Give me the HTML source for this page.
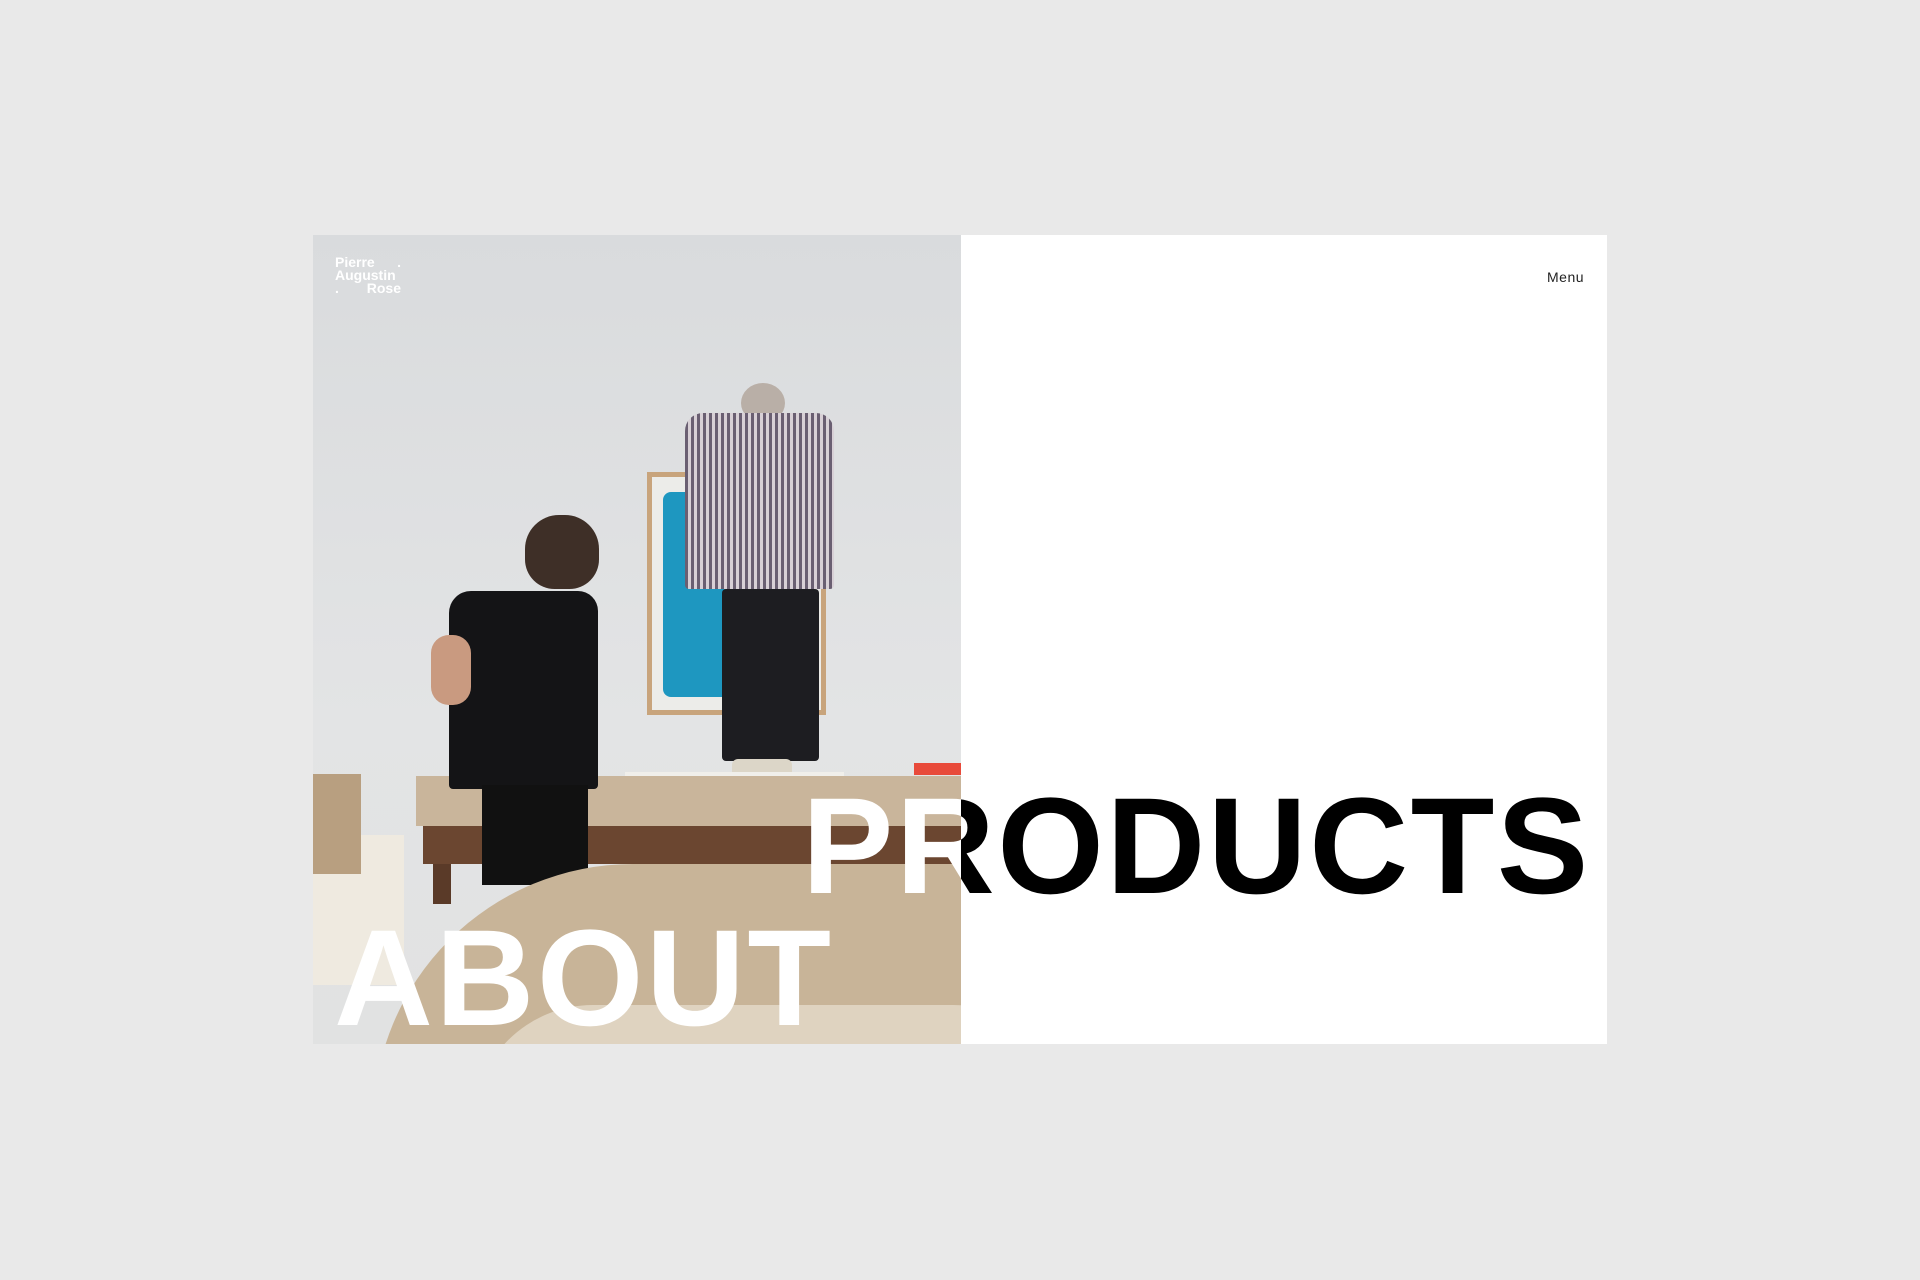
<!DOCTYPE html>
<html><head><meta charset="utf-8"><style>
*{margin:0;padding:0;box-sizing:border-box}
body{width:1920px;height:1280px;background:#e9e9e9;position:relative;overflow:hidden;font-family:"Liberation Sans",Arial,sans-serif}
#card{position:absolute;left:313px;top:235px;width:1294px;height:809px;background:#fff}
#photo{position:absolute;left:313px;top:235px;width:648px;height:809px;overflow:hidden;background:linear-gradient(#d9dbdd,#e3e4e5 60%,#e1e2e2)}
.a{position:absolute}
.big{position:absolute;font-weight:bold;font-size:137px;line-height:1;white-space:nowrap;letter-spacing:2.5px}
</style></head><body>
<div id="card"></div>
<div class="big" style="left:802px;top:778px;color:#000">PRODUCTS</div>
<div style="position:absolute;left:1547px;top:269px;font-size:14px;color:#222;letter-spacing:.5px">Menu</div>
<div id="photo">
  <div class="a" style="left:334px;top:237px;width:179px;height:243px;background:#c8a47c"></div>
  <div class="a" style="left:339px;top:242px;width:169px;height:233px;background:#ecece9"></div>
  <div class="a" style="left:350px;top:257px;width:115px;height:205px;background:#1e97c0;border-radius:8px"></div>
  <div class="a" style="left:428px;top:148px;width:44px;height:40px;border-radius:50%;background:#b9afa7"></div>
  <div class="a" style="left:372px;top:178px;width:149px;height:176px;background:repeating-linear-gradient(90deg,#6a5f72 0 3px,#d8d0d6 3px 6px);border-radius:18px 18px 4px 4px"></div>
  <div class="a" style="left:409px;top:354px;width:97px;height:172px;background:#1d1d21;border-radius:4px"></div>
  <div class="a" style="left:419px;top:524px;width:60px;height:24px;background:#dcd6c8;border-radius:6px"></div>
  <div class="a" style="left:312px;top:537px;width:219px;height:19px;background:#f0efeb"></div>
  <div class="a" style="left:103px;top:541px;width:545px;height:50px;background:#c9b59b"></div>
  <div class="a" style="left:110px;top:591px;width:538px;height:38px;background:#6b4630"></div>
  <div class="a" style="left:120px;top:629px;width:18px;height:40px;background:#5a3a28"></div>
  <div class="a" style="left:601px;top:528px;width:47px;height:12px;background:#e84a3a"></div>
  <div class="a" style="left:212px;top:280px;width:74px;height:74px;border-radius:46% 46% 40% 40%;background:#3e2f27"></div>
  <div class="a" style="left:136px;top:356px;width:149px;height:198px;background:#141416;border-radius:22px 20px 4px 4px"></div>
  <div class="a" style="left:118px;top:400px;width:40px;height:70px;background:#c99a80;border-radius:18px"></div>
  <div class="a" style="left:169px;top:550px;width:106px;height:100px;background:#111"></div>
  <div class="a" style="left:0;top:600px;width:91px;height:150px;background:#efeae0"></div>
  <div class="a" style="left:0;top:539px;width:48px;height:100px;background:#b89f80"></div>
  <div class="a" style="left:60px;top:629px;width:700px;height:260px;border-radius:300px 120px 0 0;background:#c8b498"></div>
  <div class="a" style="left:160px;top:770px;width:600px;height:120px;border-radius:200px 200px 0 0;background:#dfd3c0"></div>
  <div class="big" style="left:489px;top:543px;color:#fff">PRODUCTS</div>
  <div class="big" style="left:21px;top:675px;color:#fff">ABOUT</div>
  <div class="a" style="left:22px;top:21px;color:#fff;font-size:14px;font-weight:bold;line-height:13px;width:66px">
    <div>Pierre<span style="float:right">.</span></div>
    <div>Augustin</div>
    <div>.<span style="float:right">Rose</span></div>
  </div>
</div>
</body></html>
